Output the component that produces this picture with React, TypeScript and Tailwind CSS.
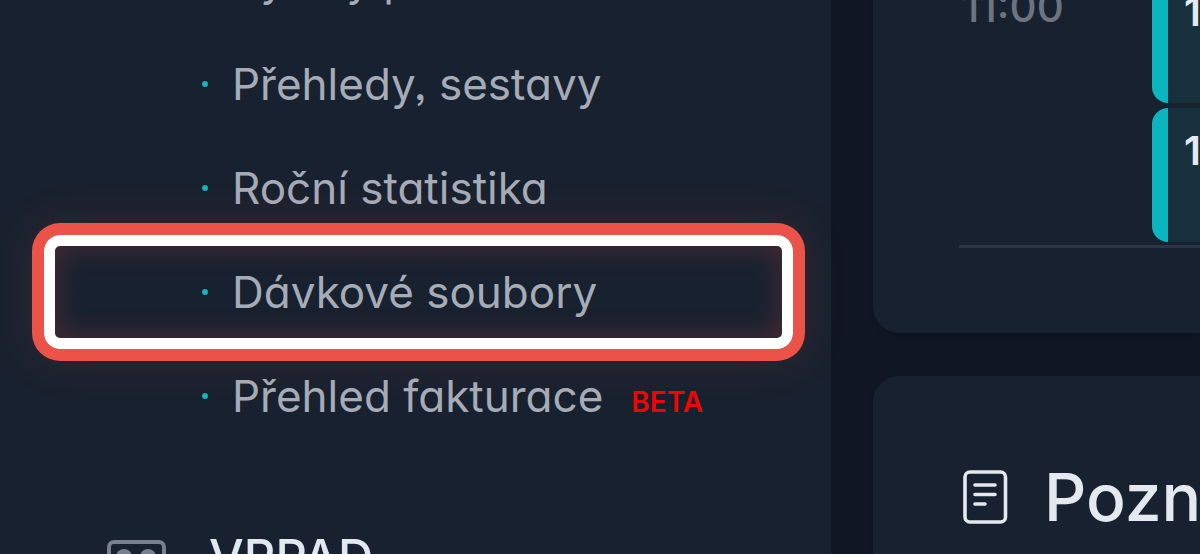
type MenuItem = { label: string; badge?: string; active?: boolean };

const menuItems: MenuItem[] = [
  { label: 'Rychlý přehled' },
  { label: 'Přehledy, sestavy' },
  { label: 'Roční statistika' },
  { label: 'Dávkové soubory', active: true },
  { label: 'Přehled fakturace', badge: 'BETA' },
];

function MenuLink({ label, badge, active }: MenuItem) {
  return (
    <li className="relative">
      <a href="#" className="flex h-26 items-center whitespace-nowrap pl-[170px] text-[44px] leading-[52px] text-[#a6acb7]">
        <span className="mr-6 size-1.5 shrink-0 rounded-full bg-[#14b3be]" />
        <span className="flex items-baseline gap-7">
          {label}
          {badge && <span className="text-[28px] leading-7 font-semibold text-[#f00505]">{badge}</span>}
        </span>
      </a>
      {active && (
        <span className="pointer-events-none absolute inset-x-3 -inset-y-[5px] z-10 rounded-[16px] border-[11px] border-white shadow-[0_0_0_12px_#eb5248,0_0_44px_12px_rgba(235,82,72,0.14),inset_0_0_26px_4px_rgba(235,82,72,0.2)]" />
      )}
    </li>
  );
}

function Sidebar() {
  return (
    <nav className="w-[831px] shrink-0 bg-[#18212f]">
      <ul className="-mt-[72px] pl-8 pr-[26px]">
        {menuItems.map((item) => (
          <MenuLink key={item.label} {...item} />
        ))}
      </ul>
      <a href="#" className="mt-20 flex items-start gap-[43px] pl-[107px] text-[49px] leading-[60px] font-medium text-[#e2e7f0]">
        <svg className="mt-3 h-[54px] w-[59px]" viewBox="0 0 59 54" fill="none" aria-hidden="true">
          <rect x="2" y="2" width="55" height="50" rx="5" stroke="#77808c" strokeWidth="4" />
          <circle cx="17" cy="17" r="8" fill="#77808c" />
          <circle cx="41" cy="17" r="8" fill="#77808c" />
        </svg>
        VRPAD
      </a>
    </nav>
  );
}

function Appointment({ label }: { label: string }) {
  return (
    <li className="h-[134px] overflow-hidden whitespace-nowrap rounded-l-[16px] border-l-[16px] border-[#0bb5bf] bg-[#18303c] pl-4 pt-[18px] text-[40px] leading-[50px] font-semibold text-[#e5eaf2]">
      {label}
    </li>
  );
}

export default function App() {
  return (
    <div
      className="flex h-screen overflow-hidden bg-[#101624] font-['Inter','Noto_Sans',sans-serif]"
      style={{ fontFeatureSettings: '"cv11", "ss03"' }}
    >
      <Sidebar />
      <main className="flex min-w-0 flex-1 flex-col gap-[43px] pl-[42px]">
        <section className="-mt-8 h-[365px] shrink-0 rounded-l-[26px] bg-[#18212f] pl-[86px] shadow-md">
          <div className="flex h-[280px] border-b-3 border-[#2c3543]">
            <time className="w-[193px] shrink-0 pl-[3px] pt-[14px] text-[42px] leading-[50px] font-medium text-[#6d7480]">11:00</time>
            <ul className="flex min-w-0 flex-1 flex-col justify-end gap-[5px] pb-[3px]">
              <Appointment label="11:00" />
              <Appointment label="11:30" />
            </ul>
          </div>
        </section>
        <section className="flex-1 rounded-tl-[26px] bg-[#18212f] pl-[90px] pt-[81px] shadow-md">
          <h2 className="flex items-center gap-9 whitespace-nowrap text-[66px] leading-20 font-medium text-[#e4e8ef]">
            <svg className="h-[54px] w-[45px] shrink-0" viewBox="0 0 45 54" fill="none" stroke="#e4e8ef" strokeWidth="3.6" strokeLinecap="round" aria-hidden="true">
              <rect x="2" y="2" width="40.5" height="50" rx="5" />
              <path d="M12 15h20M12 24.5h20M12 34h10" />
            </svg>
            Poznámky
          </h2>
        </section>
      </main>
    </div>
  );
}
